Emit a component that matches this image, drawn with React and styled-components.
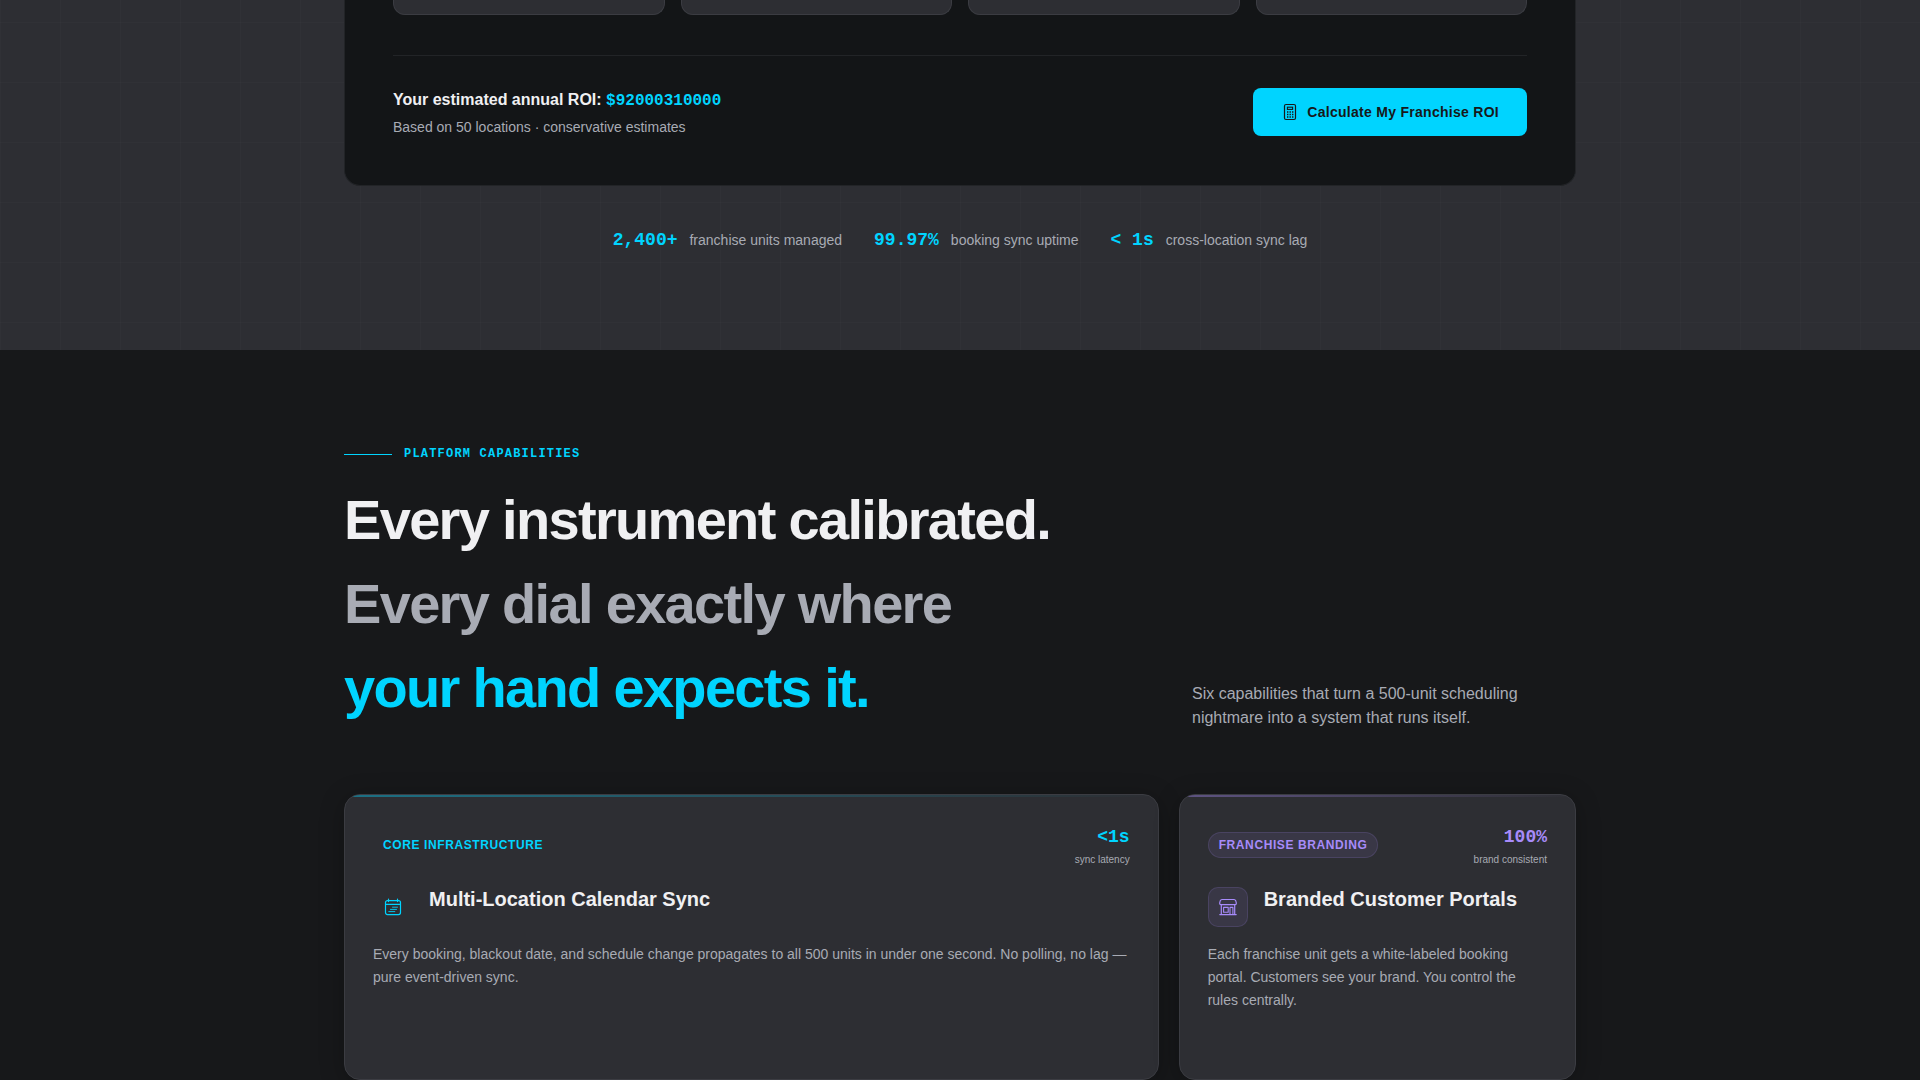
import React from 'react';
import styled, { createGlobalStyle } from 'styled-components';

const colors = {
  cyan: '#00d4ff',
  violet: '#a78bfa',
  white: '#f0f0f2',
  muted: '#a8abb4',
  ink: '#17181a',
  panel: '#131517',
  slate: '#2d2e33',
};

const GlobalStyle = createGlobalStyle`
  * {
    box-sizing: border-box;
  }

  body {
    margin: 0;
    background: ${colors.ink};
    color: ${colors.white};
    font-family: "Liberation Sans", Arial, sans-serif;
    font-size: 16px;
    line-height: 24px;
  }

  h2, h3, p {
    margin: 0;
  }
`;

const Container = styled.div`
  max-width: 1280px;
  margin: 0 auto;
  padding: 0 24px;
`;

const RoiSection = styled.section`
  padding-bottom: 96px;
  background-color: ${colors.slate};
  background-image: linear-gradient(rgba(255, 255, 255, 0.015) 1px, transparent 1px),
    linear-gradient(90deg, rgba(255, 255, 255, 0.015) 1px, transparent 1px);
  background-size: 60px 60px;
  background-position: 0 22px;
`;

const RoiPanel = styled.div`
  padding: 0 48px 48px;
  background: ${colors.panel};
  border: 1px solid #222427;
  border-top: 0;
  border-radius: 0 0 16px 16px;
`;

const ResultGrid = styled.div`
  display: grid;
  grid-template-columns: repeat(4, 1fr);
  gap: 16px;
`;

const ResultCard = styled.div`
  height: 15px;
  background: ${colors.slate};
  border: 1px solid #3b3c42;
  border-top: 0;
  border-radius: 0 0 12px 12px;
`;

const RoiFooter = styled.div`
  display: flex;
  align-items: flex-start;
  justify-content: space-between;
  gap: 24px;
  margin-top: 40px;
  padding-top: 32px;
  border-top: 1px solid #222427;
`;

const RoiTotal = styled.p`
  font-weight: 700;
`;

const Mono = styled.span`
  font-family: "Liberation Mono", "Courier New", monospace;
  font-weight: 700;
  color: ${(props) => props.$color || colors.cyan};
`;

const RoiNote = styled.p`
  margin-top: 4px;
  font-size: 14px;
  line-height: 20px;
  color: ${colors.muted};
`;

const CalculateButton = styled.button`
  display: inline-flex;
  align-items: center;
  gap: 8px;
  height: 48px;
  padding: 0 28px;
  border: 0;
  border-radius: 8px;
  background: ${colors.cyan};
  color: ${colors.ink};
  font-family: inherit;
  font-size: 14px;
  font-weight: 700;
  letter-spacing: 0.02em;
  cursor: pointer;
`;

const Stats = styled.div`
  display: flex;
  flex-wrap: wrap;
  justify-content: center;
  gap: 32px;
  margin-top: 40px;
`;

const Stat = styled.div`
  display: flex;
  align-items: center;
  gap: 12px;
  font-size: 14px;
  line-height: 28px;
  color: ${colors.muted};

  ${Mono} {
    font-size: 18px;
  }
`;

const Capabilities = styled.section`
  padding-top: 96px;
  background: ${colors.ink};
`;

const Eyebrow = styled.div`
  display: flex;
  align-items: center;
  gap: 12px;
  margin-bottom: 16px;
  font-size: 12px;
  line-height: 16px;
  letter-spacing: 0.1em;
  text-transform: uppercase;

  &::before {
    content: '';
    width: 48px;
    height: 1px;
    background: ${colors.cyan};
  }
`;

const Intro = styled.div`
  display: flex;
  align-items: flex-end;
  justify-content: space-between;
  gap: 48px;
  margin-bottom: 64px;
`;

const Heading = styled.h2`
  font-size: 56px;
  font-weight: 700;
  line-height: 84px;
  letter-spacing: -0.03em;
`;

const HeadingLine = styled.span`
  display: block;
  color: ${(props) => props.$color};
`;

const Lead = styled.p`
  width: 384px;
  color: ${colors.muted};
`;

const CardGrid = styled.div`
  display: grid;
  grid-template-columns: repeat(12, 1fr);
  gap: 20px;
`;

const Card = styled.article`
  position: relative;
  grid-column: span ${(props) => props.$span};
  min-height: 286px;
  padding: 28px;
  overflow: hidden;
  background: ${colors.slate};
  border: 1px solid #3b3c42;
  border-radius: 16px;
  box-shadow: 0 4px 24px rgba(0, 0, 0, 0.25);

  &::before {
    content: '';
    position: absolute;
    top: 0;
    left: 0;
    right: 0;
    height: 2px;
    background: linear-gradient(90deg, ${(props) => props.$accent}, transparent);
    opacity: 0.4;
  }
`;

const CardHeader = styled.div`
  display: flex;
  align-items: center;
  justify-content: space-between;
  margin-bottom: 20px;
`;

const Badge = styled.span`
  padding: 3px 10px;
  border: ${(props) => (props.$filled ? '1px solid rgba(167, 139, 250, 0.15)' : '0')};
  border-radius: 13px;
  background: ${(props) => (props.$filled ? 'rgba(167, 139, 250, 0.1)' : 'transparent')};
  color: ${(props) => props.$color};
  font-size: 12px;
  font-weight: 700;
  line-height: 18px;
  letter-spacing: 0.05em;
  text-transform: uppercase;
`;

const Metric = styled.div`
  display: flex;
  flex-direction: column;
  align-items: flex-end;
  font-size: 10px;
  line-height: 15px;
  color: ${colors.muted};

  ${Mono} {
    font-size: 18px;
    line-height: 29px;
  }
`;

const TitleRow = styled.div`
  display: flex;
  gap: 16px;
  margin-bottom: 16px;
`;

const IconBox = styled.div`
  display: flex;
  align-items: center;
  justify-content: center;
  width: 40px;
  height: 40px;
  border: ${(props) => (props.$filled ? '1px solid rgba(167, 139, 250, 0.15)' : '0')};
  border-radius: 10px;
  background: ${(props) => (props.$filled ? 'rgba(167, 139, 250, 0.1)' : 'transparent')};
  color: ${(props) => props.$color};
`;

const Title = styled.h3`
  font-size: 20px;
  font-weight: 700;
  line-height: 25px;
`;

const Description = styled.p`
  font-size: 14px;
  line-height: 23px;
  color: ${colors.muted};
`;

const CalculatorIcon = () => (
  <svg width="18" height="18" viewBox="0 0 18 18" fill="none" stroke="currentColor" aria-hidden="true">
    <rect x="3.5" y="1.5" width="11" height="15" rx="1.5" strokeWidth="1.2" />
    <rect x="6.4" y="4.2" width="5.2" height="2.2" strokeWidth="1.1" />
    <path d="M6 9h6.4M6 11.5h6.4M6 14h6.4" strokeDasharray="1.4 1.1" strokeWidth="1.3" />
  </svg>
);

const CalendarIcon = () => (
  <svg width="20" height="20" viewBox="0 0 20 20" fill="none" stroke="currentColor" strokeLinecap="round" aria-hidden="true">
    <rect x="2.5" y="3.6" width="15" height="14" rx="2" strokeWidth="1.2" />
    <path d="M2.5 7.4h15M5.5 2.2v2.4M14.5 2.2v2.4" strokeWidth="1.2" />
    <path d="M9.5 10.2h5M7.5 12.4h6M5.8 14.6h6" strokeWidth="0.9" />
  </svg>
);

const StoreIcon = () => (
  <svg width="20" height="20" viewBox="0 0 20 20" fill="none" stroke="currentColor" strokeLinejoin="round" strokeLinecap="round" aria-hidden="true">
    <path d="M4 2.5h12a2 2 0 0 1 1.7 1.2l.6 2.1v.8a1 1 0 0 1-1 1H2.7a1 1 0 0 1-1-1v-.8l.6-2.1A2 2 0 0 1 4 2.5z" strokeWidth="1.2" />
    <path d="M3.3 7.6v10M16.7 7.6v10M1.8 17.6h16.4" strokeWidth="1.2" />
    <path d="M5.6 10.4h4.6v4.8H5.6zM12 17.5v-7.1h2.9v7.1" strokeWidth="1.1" />
  </svg>
);

const stats = [
  { value: '2,400+', label: 'franchise units managed' },
  { value: '99.97%', label: 'booking sync uptime' },
  { value: '< 1s', label: 'cross-location sync lag' },
];

const features = [
  {
    tag: 'Core Infrastructure',
    title: 'Multi-Location Calendar Sync',
    text: 'Every booking, blackout date, and schedule change propagates to all 500 units in under one second. No polling, no lag — pure event-driven sync.',
    metric: '<1s',
    metricLabel: 'sync latency',
    color: colors.cyan,
    span: 8,
    filled: false,
    Icon: CalendarIcon,
  },
  {
    tag: 'Franchise Branding',
    title: 'Branded Customer Portals',
    text: 'Each franchise unit gets a white-labeled booking portal. Customers see your brand. You control the rules centrally.',
    metric: '100%',
    metricLabel: 'brand consistent',
    color: colors.violet,
    span: 4,
    filled: true,
    Icon: StoreIcon,
  },
];

function FeatureCard({ tag, title, text, metric, metricLabel, color, span, filled, Icon }) {
  return (
    <Card $span={span} $accent={color}>
      <CardHeader>
        <Badge $color={color} $filled={filled}>{tag}</Badge>
        <Metric>
          <Mono $color={color}>{metric}</Mono>
          <span>{metricLabel}</span>
        </Metric>
      </CardHeader>
      <TitleRow>
        <IconBox $color={color} $filled={filled}>
          <Icon />
        </IconBox>
        <Title>{title}</Title>
      </TitleRow>
      <Description>{text}</Description>
    </Card>
  );
}

export default function App() {
  return (
    <main>
      <GlobalStyle />
      <RoiSection>
        <Container>
          <RoiPanel>
            <ResultGrid>
              <ResultCard />
              <ResultCard />
              <ResultCard />
              <ResultCard />
            </ResultGrid>
            <RoiFooter>
              <div>
                <RoiTotal>
                  Your estimated annual ROI: <Mono>$92000310000</Mono>
                </RoiTotal>
                <RoiNote>Based on 50 locations · conservative estimates</RoiNote>
              </div>
              <CalculateButton type="button">
                <CalculatorIcon />
                Calculate My Franchise ROI
              </CalculateButton>
            </RoiFooter>
          </RoiPanel>
          <Stats>
            {stats.map((stat) => (
              <Stat key={stat.label}>
                <Mono>{stat.value}</Mono>
                <span>{stat.label}</span>
              </Stat>
            ))}
          </Stats>
        </Container>
      </RoiSection>
      <Capabilities>
        <Container>
          <Eyebrow>
            <Mono>Platform Capabilities</Mono>
          </Eyebrow>
          <Intro>
            <Heading>
              <HeadingLine $color={colors.white}>Every instrument calibrated.</HeadingLine>
              <HeadingLine $color={colors.muted}>Every dial exactly where</HeadingLine>
              <HeadingLine $color={colors.cyan}>your hand expects it.</HeadingLine>
            </Heading>
            <Lead>
              Six capabilities that turn a 500-unit scheduling nightmare into a system that runs itself.
            </Lead>
          </Intro>
          <CardGrid>
            {features.map((feature) => (
              <FeatureCard key={feature.title} {...feature} />
            ))}
          </CardGrid>
        </Container>
      </Capabilities>
    </main>
  );
}
